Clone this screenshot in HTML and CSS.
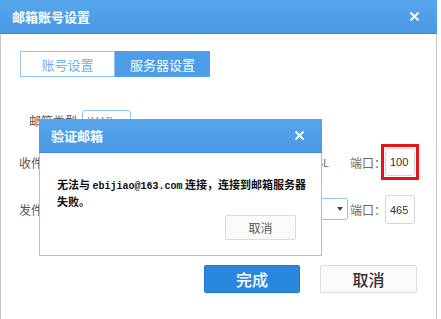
FILE: index.html
```html
<!DOCTYPE html>
<html lang="zh">
<head>
<meta charset="utf-8">
<title>邮箱账号设置</title>
<link rel="stylesheet" href="styles.css">
</head>
<body>
<div class="dialog">
  <div class="titlebar">
    <span class="title">邮箱账号设置</span>
    <svg class="close" width="11" height="11" viewBox="0 0 11 11"><path d="M1.5 1.5 L9.5 9.5 M9.5 1.5 L1.5 9.5" stroke="#fff" stroke-width="2" fill="none"/></svg>
  </div>
  <div class="tabs">
    <div class="tab">账号设置</div>
    <div class="tab active">服务器设置</div>
  </div>
  <div class="form">
    <div class="row row-type">
      <span class="label">邮箱类型</span>
      <div class="field small">IMAP</div>
    </div>
    <div class="row row-in">
      <span class="label">收件服务器</span>
      <div class="field grow"></div>
      <span class="ssl">SSL</span>
      <span class="port-label">端口：</span>
      <div class="highlight"><div class="port">100</div></div>
    </div>
    <div class="row row-out">
      <span class="label">发件服务器</span>
      <div class="field grow select"><span class="arrow"></span></div>
      <span class="port-label">端口：</span>
      <div class="port">465</div>
    </div>
  </div>
  <div class="footer">
    <div class="btn primary">完成</div>
    <div class="btn">取消</div>
  </div>

  <div class="modal">
    <div class="modal-head">
      <span class="modal-title">验证邮箱</span>
      <svg class="close" width="11" height="11" viewBox="0 0 11 11"><path d="M1.5 1.5 L9.5 9.5 M9.5 1.5 L1.5 9.5" stroke="#fff" stroke-width="1.8" fill="none"/></svg>
    </div>
    <div class="modal-body">
      <p class="message">无法与 <span class="mono">ebijiao@163.com</span> 连接，连接到邮箱服务器失败。</p>
      <div class="modal-actions">
        <div class="btn-small">取消</div>
      </div>
    </div>
  </div>
</div>
</body>
</html>
```

FILE: styles.css
```css
* { box-sizing: border-box; }

html, body {
  margin: 0;
  padding: 0;
  background: #fff;
}

body {
  font-family: "Noto Sans CJK SC", "Liberation Sans", sans-serif;
  font-size: 12px;
  color: #333;
}

.dialog {
  position: relative;
  width: 437px;
  height: 319px;
  border-left: 1px solid #c6c6c6;
  border-right: 1px solid #c6c6c6;
  background: #fff;
}

.titlebar {
  height: 34px;
  margin: 0 -1px;
  padding: 0 17px 0 12px;
  display: flex;
  align-items: center;
  justify-content: space-between;
  background: linear-gradient(#58a6ec, #4a98e5);
  border-bottom: 1px solid #3f8ad8;
}

.title {
  color: #fff;
  font-size: 13px;
  font-weight: bold;
  line-height: 1;
}

.close { display: block; }

.tabs {
  display: flex;
  margin: 17px 0 0 19px;
  height: 26px;
}

.tab {
  width: 95px;
  height: 26px;
  display: flex;
  align-items: center;
  justify-content: center;
  font-size: 13px;
  color: #6cb0ee;
  border: 1px solid #8ec2f1;
  background: #fff;
}

.tab.active {
  background: #4d9de8;
  border-color: #4d9de8;
  color: #fff;
}

.form {
  padding: 0 21px 0 18px;
}

.row {
  display: flex;
  align-items: center;
}

.row-type { height: 20px; margin-top: 33px; }
.row-in { height: 28px; margin-top: 18px; }
.row-out { height: 29px; margin-top: 19px; }

.label {
  width: 58px;
  text-align: right;
  color: #555;
  font-size: 12px;
  margin-right: 5px;
  white-space: nowrap;
}

.field {
  height: 20px;
  border: 1px solid #8cc3f3;
  border-radius: 3px;
  font-size: 11px;
  color: #999;
  padding-left: 4px;
  display: flex;
  align-items: center;
}

.field.small { width: 49px; }

.field.grow { flex: 1; }

.select {
  position: relative;
  height: 22px;
  margin-top: -1px;
  margin-right: 2px;
}

.arrow {
  position: absolute;
  right: 4px;
  top: 8px;
  border-left: 3px solid transparent;
  border-right: 3px solid transparent;
  border-top: 4px solid #2f4f66;
}

.ssl {
  color: #666;
  font-size: 11px;
  margin: 0 21px 0 8px;
}

.port-label {
  color: #666;
  font-size: 12px;
  width: 35px;
  white-space: nowrap;
}

.port {
  width: 30px;
  height: 100%;
  border: 1px solid #d6d6d6;
  border-radius: 3px;
  font-family: "Liberation Sans", sans-serif;
  font-size: 11px;
  color: #333;
  display: flex;
  align-items: center;
  padding-left: 4px;
}

.highlight {
  height: 36px;
  margin: 0 -4px;
  padding: 1px;
  border: 3px solid #e8141b;
}

.footer {
  display: flex;
  justify-content: flex-end;
  gap: 20px;
  margin-top: 41px;
  padding-right: 19px;
}

.btn {
  width: 97px;
  height: 28px;
  display: flex;
  align-items: center;
  justify-content: center;
  font-size: 16px;
  font-weight: 500;
  color: #333;
  background: #fafafa;
  border: 1px solid #dedede;
  border-radius: 2px;
}

.btn.primary {
  width: 96px;
  background: #2a87de;
  border-color: #1f79d0;
  color: #fff;
}

.modal {
  position: absolute;
  left: 38px;
  top: 119px;
  width: 283px;
  height: 137px;
  display: flex;
  flex-direction: column;
  background: #fff;
}

.modal-head {
  height: 34px;
  display: flex;
  align-items: center;
  justify-content: space-between;
  padding: 0 17px 0 12px;
  background: linear-gradient(#58a6ec, #4a98e5);
  border-bottom: 1px solid #3f8ad8;
}

.modal-title {
  color: #fff;
  font-size: 13px;
  font-weight: bold;
  line-height: 1;
}

.modal-body {
  flex: 1;
  border: 1px solid #bdbdbd;
  border-top: none;
  padding: 24px 25px 0 17px;
}

.message {
  margin: 0;
  width: 258px;
  font-size: 11px;
  line-height: 14px;
  font-weight: bold;
  color: #111;
}

.mono {
  font-family: "Liberation Mono", monospace;
  font-size: 10px;
  font-weight: bold;
}

.modal-actions {
  display: flex;
  justify-content: flex-end;
  margin-top: 7px;
}

.btn-small {
  width: 71px;
  height: 25px;
  display: flex;
  align-items: center;
  justify-content: center;
  font-size: 12px;
  color: #555;
  background: #fafafa;
  border: 1px solid #dcdcdc;
  border-radius: 2px;
}
```
